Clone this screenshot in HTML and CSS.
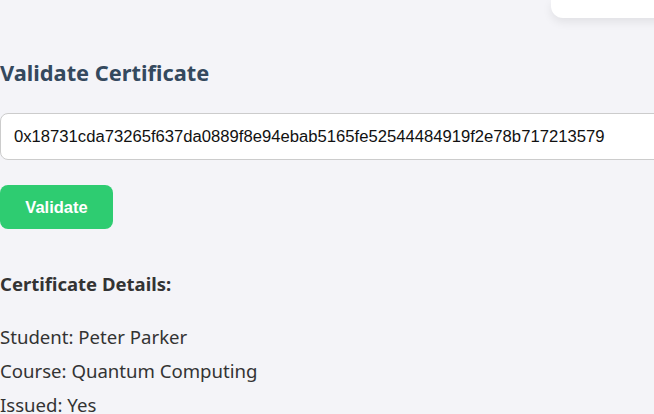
FILE: index.html
```html
<!DOCTYPE html>
<html>
<head>
<meta charset="utf-8">
<link rel="stylesheet" href="styles.css">
</head>
<body>
<div class="page">
  <div class="topbar"><div class="card"></div></div>
  <h2 class="title">Validate Certificate</h2>
  <input class="hash" type="text" value="0x18731cda73265f637da0889f8e94ebab5165fe52544484919f2e78b717213579">
  <button class="btn">Validate</button>
  <h3 class="details-title">Certificate Details:</h3>
  <p class="line">Student: Peter Parker</p>
  <p class="line">Course: Quantum Computing</p>
  <p class="line">Issued: Yes</p>
</div>
</body>
</html>
```
FILE: styles.css
```css
html, body {
  margin: 0;
  padding: 0;
  background: #f4f4f8;
  overflow: hidden;
}
.page {
  width: 720px;
  font-family: "Noto Sans", "Open Sans", sans-serif;
  color: #333;
}
.topbar {
  display: flex;
  justify-content: flex-end;
}
.card {
  width: 169px;
  height: 18px;
  background: #fff;
  border-bottom-left-radius: 12px;
  box-shadow: 0 4px 10px rgba(0,0,0,0.08);
}
.title {
  margin: 40px 0 0;
  font-size: 21.8px;
  font-weight: 700;
  color: #34495e;
  line-height: 30px;
}
.hash {
  display: block;
  box-sizing: border-box;
  width: 700px;
  height: 47px;
  margin-top: 25px;
  padding: 0 13px;
  border: 1px solid #ccc;
  border-radius: 8px;
  background: #fff;
  font-family: "Liberation Sans", Arial, sans-serif;
  font-size: 16.65px;
  color: #111;
}
.btn {
  display: block;
  margin-top: 25px;
  width: 113px;
  height: 44px;
  border: none;
  border-radius: 8px;
  background: #2ecc71;
  color: #fff;
  font-family: "Liberation Sans", Arial, sans-serif;
  font-weight: 700;
  font-size: 16.5px;
}
.details-title {
  margin: 43px 0 0;
  font-size: 18.5px;
  font-weight: 700;
  line-height: 24px;
  color: #333;
}
.line {
  margin: 0;
  font-size: 18.6px;
  line-height: 34px;
}
.details-title + .line {
  margin-top: 24px;
}
```
